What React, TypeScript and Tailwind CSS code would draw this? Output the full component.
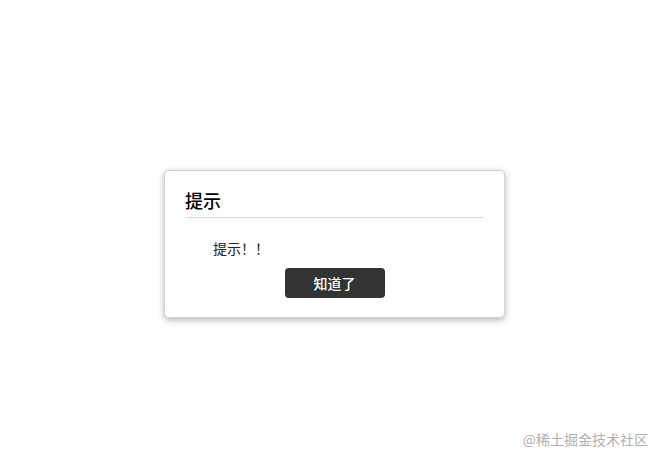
export default function App() {
  return (
    <div
      className="relative h-[463px] w-[662px] overflow-hidden bg-white pl-[164px] pt-[170px]"
      style={{ fontFamily: '"Microsoft YaHei", "Noto Sans CJK SC", sans-serif' }}
    >
      <div className="w-[341px] rounded-[5px] border border-[#d4d4d4] bg-white px-5 pb-[19px] pt-[17px] shadow-[0_2px_6px_rgba(0,0,0,0.3)]">
        <h3 className="border-b border-[#dcdcdc] pb-[5px] text-[18px] font-medium leading-[24px] text-black">
          提示
        </h3>
        <p className="mt-[20px] indent-[28px] text-[14px] leading-[20px] text-[#222]">
          提示！！
        </p>
        <div className="mt-[10px] flex justify-center">
          <button className="h-[30px] w-[100px] rounded-[4px] bg-[#333] text-[14px] font-medium text-white">
            知道了
          </button>
        </div>
      </div>
      <div className="absolute bottom-[14px] right-[14px] text-[14px] leading-[20px] text-[#b0b0b0]">
        @稀土掘金技术社区
      </div>
    </div>
  )
}
